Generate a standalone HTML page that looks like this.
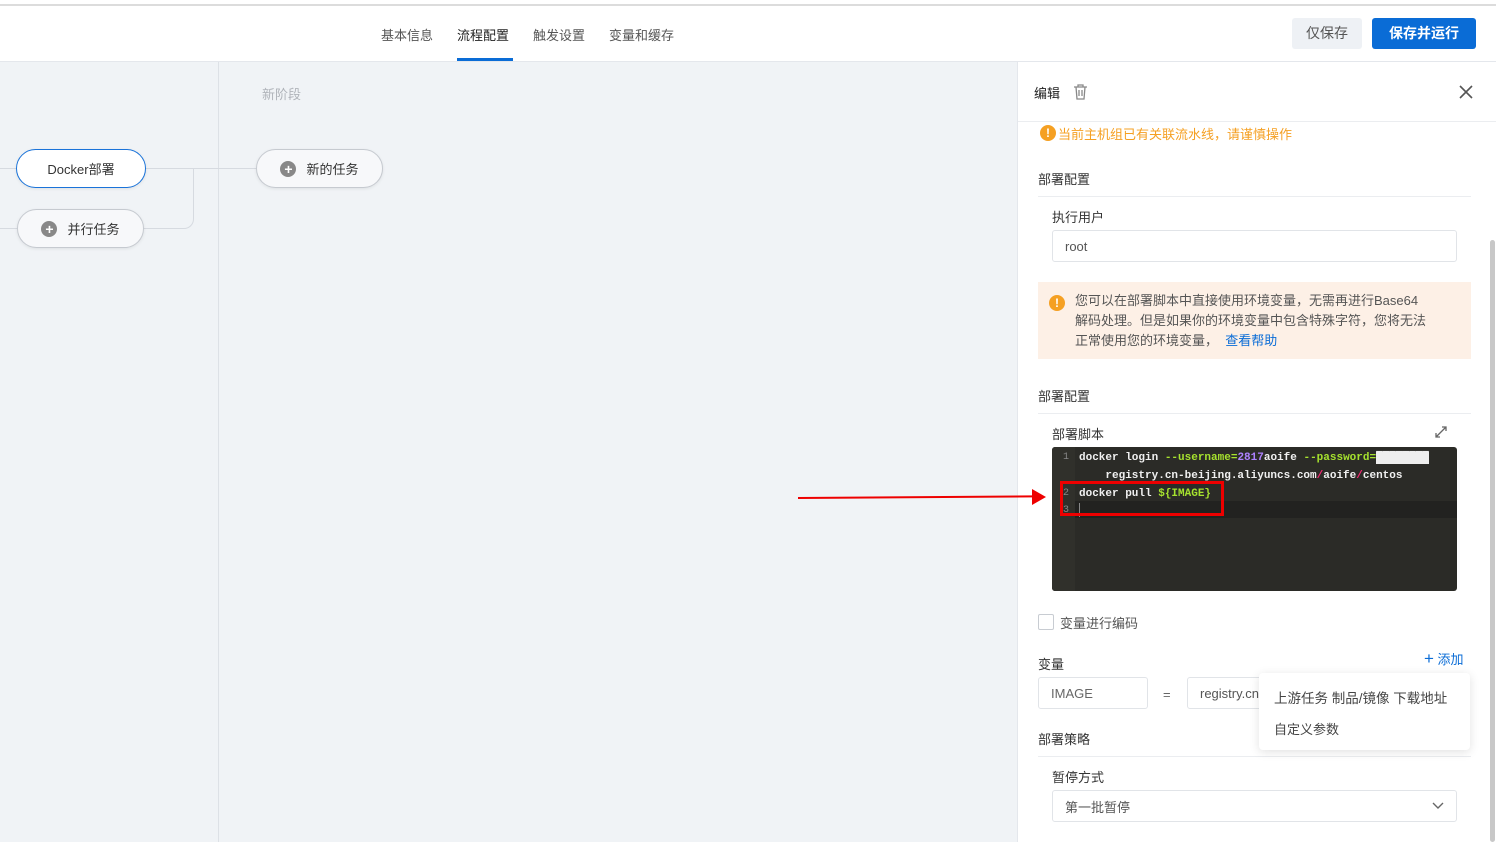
<!DOCTYPE html>
<html><head><meta charset="utf-8"><style>
*{box-sizing:border-box;margin:0;padding:0}
body{width:1496px;height:842px;overflow:hidden;position:relative;background:#f0f3f6;font-family:"Liberation Sans","Noto Sans CJK SC",sans-serif;font-size:13px;color:#333}
.a{position:absolute}
.hdr{left:0;top:0;width:1496px;height:62px;background:#fff;border-bottom:1px solid #e4e7ec}
.tab{top:25px;font-size:13px;color:#555}
.pill{border:1px solid #c6cad0;border-radius:20px;background:#f7f8fa;height:39px;display:flex;align-items:center;justify-content:center;font-size:13px;color:#333;box-shadow:0 1px 3px rgba(0,0,0,.08)}
.plus{width:16px;height:16px;border-radius:50%;background:#888;color:#fff;font-size:14px;line-height:16px;text-align:center;margin-right:10px;font-weight:bold}
.ln{background:#d6dae0}
.panel{left:1017px;top:62px;width:479px;height:780px;background:#fff;border-left:1px solid #e4e7ec}
.lbl{font-size:13px;color:#333}
.sep{height:1px;background:#ebedf0}
.inp{border:1px solid #e1e4e8;border-radius:3px;background:#fff;font-size:13px;color:#555;padding-left:12px;display:flex;align-items:center}
.code{font-family:"Liberation Mono",monospace;font-size:11px;color:#f0f0f0;white-space:pre;font-weight:bold}
.num{font-family:"Liberation Mono",monospace;font-size:10px;color:#888;left:11px}
</style></head><body>
<div class="a hdr"></div>
<div class="a" style="left:0;top:4px;width:1496px;height:2px;background:#dcdcdc"></div>
<div class="a tab" style="left:381px">基本信息</div>
<div class="a tab" style="left:457px;color:#222">流程配置</div>
<div class="a" style="left:457px;top:58px;width:56px;height:3px;background:#0a6cd6"></div>
<div class="a tab" style="left:533px">触发设置</div>
<div class="a tab" style="left:609px">变量和缓存</div>
<div class="a" style="left:1292px;top:18px;width:70px;height:31px;background:#eef1f5;border-radius:3px;font-size:14px;color:#555;text-align:center;line-height:31px">仅保存</div>
<div class="a" style="left:1372px;top:18px;width:104px;height:31px;background:#0a6cd6;border-radius:3px;font-size:14px;color:#fff;text-align:center;line-height:31px;font-weight:bold">保存并运行</div>

<div class="a" style="left:218px;top:62px;width:1px;height:780px;background:#dde1e6"></div>
<div class="a" style="left:262px;top:84px;color:#b0b4ba;font-size:13px">新阶段</div>
<div class="a ln" style="left:0;top:168px;width:16px;height:1px"></div>
<div class="a ln" style="left:0;top:228px;width:18px;height:1px"></div>
<div class="a ln" style="left:145px;top:168px;width:112px;height:1px"></div>
<div class="a" style="left:143px;top:168px;width:51px;height:61px;border-right:1px solid #d6dae0;border-bottom:1px solid #d6dae0;border-bottom-right-radius:10px;border-top:0"></div>
<div class="a pill" style="left:16px;top:149px;width:130px;border-color:#1a73d9;background:#fff">Docker部署</div>
<div class="a pill" style="left:17px;top:209px;width:127px"><span class="plus">+</span>并行任务</div>
<div class="a pill" style="left:256px;top:149px;width:127px"><span class="plus">+</span>新的任务</div>

<div class="a panel"></div>
<div class="a lbl" style="left:1034px;top:83px;color:#222">编辑</div>
<svg class="a" style="left:1073px;top:84px" width="15" height="16" viewBox="0 0 15 16"><path d="M1 3h13M5 3V1h5v2M3 3l1 12h7l1-12M6 6v6M9 6v6" stroke="#888" fill="none" stroke-width="1.3"/></svg>
<svg class="a" style="left:1458px;top:84px" width="16" height="16"><path d="M2 2l12 12M14 2L2 14" stroke="#555" stroke-width="1.6"/></svg>
<div class="a sep" style="left:1018px;top:121px;width:478px"></div>
<div class="a" style="left:1040px;top:125px;width:16px;height:16px;border-radius:50%;background:#f5a023;color:#fff;font-size:12px;font-weight:bold;text-align:center;line-height:16px">!</div>
<div class="a" style="left:1058px;top:124px;color:#f5a023;font-size:13px">当前主机组已有关联流水线，请谨慎操作</div>
<div class="a lbl" style="left:1038px;top:169px">部署配置</div>
<div class="a sep" style="left:1038px;top:196px;width:433px"></div>
<div class="a lbl" style="left:1052px;top:207px">执行用户</div>
<div class="a inp" style="left:1052px;top:230px;width:405px;height:32px">root</div>
<div class="a" style="left:1038px;top:282px;width:433px;height:77px;background:#fdf0e6"></div>
<div class="a" style="left:1049px;top:295px;width:16px;height:16px;border-radius:50%;background:#f5a023;color:#fff;font-size:12px;font-weight:bold;text-align:center;line-height:16px">!</div>
<div class="a" style="left:1075px;top:291px;white-space:nowrap;font-size:13px;line-height:20px;color:#555">您可以在部署脚本中直接使用环境变量，无需再进行Base64<br>解码处理。但是如果你的环境变量中包含特殊字符，您将无法<br>正常使用您的环境变量， <span style="color:#0a6cd6">&nbsp;查看帮助</span></div>
<div class="a lbl" style="left:1038px;top:386px">部署配置</div>
<div class="a sep" style="left:1038px;top:413px;width:433px"></div>
<div class="a lbl" style="left:1052px;top:424px">部署脚本</div>
<svg class="a" style="left:1434px;top:425px" width="14" height="14"><path d="M2 12L12 2M8 2h4v4M2 8v4h4" stroke="#666" fill="none" stroke-width="1.3"/></svg>
<div class="a" style="left:1052px;top:447px;width:405px;height:144px;background:#2b2b27;border-radius:3px;overflow:hidden">
  <div class="a" style="left:0;top:0;width:23px;height:144px;background:#30302b"></div>
  <div class="a" style="left:23px;top:54px;width:382px;height:17px;background:#222220"></div>
  <div class="a num" style="top:5px">1</div>
  <div class="a num" style="top:41px">2</div>
  <div class="a num" style="top:58px">3</div>
  <div class="a" style="left:27px;top:56px;width:1px;height:14px;background:#888"></div>
  <div class="a code" style="left:27px;top:2px;line-height:18px">docker login <span style="color:#a6e22e">--username=</span><span style="color:#ae81ff">2817</span>aoife <span style="color:#a6e22e">--password=</span><span style="background:#eee;color:#eee">████████</span>
    registry.cn-beijing.aliyuncs.com<span style="color:#f92672">/</span>aoife<span style="color:#f92672">/</span>centos
docker pull <span style="color:#a6e22e">${IMAGE}</span></div>
</div>
<div class="a" style="left:1060px;top:481px;width:164px;height:35px;border:3px solid #e00"></div>
<div class="a" style="left:798px;top:497px;width:236px;height:2px;background:#e00;transform:rotate(-0.4deg);transform-origin:left"></div>
<div class="a" style="left:1032px;top:489px;width:0;height:0;border-left:14px solid #e00;border-top:8px solid transparent;border-bottom:8px solid transparent"></div>

<div class="a" style="left:1038px;top:614px;width:16px;height:16px;border:1px solid #c8ccd2;border-radius:2px;background:#fff"></div>
<div class="a lbl" style="left:1060px;top:613px;color:#555">变量进行编码</div>
<div class="a lbl" style="left:1038px;top:654px">变量</div>
<div class="a" style="left:1424px;top:649px;color:#0a6cd6;font-size:13px"><span style="font-size:17px">+</span> 添加</div>
<div class="a inp" style="left:1038px;top:677px;width:110px;height:32px;color:#666">IMAGE</div>
<div class="a" style="left:1163px;top:687px;color:#666">=</div>
<div class="a inp" style="left:1187px;top:677px;width:100px;height:32px;overflow:hidden;white-space:nowrap">registry.cn</div>
<div class="a lbl" style="left:1038px;top:729px">部署策略</div>
<div class="a sep" style="left:1038px;top:756px;width:433px"></div>
<div class="a" style="left:1259px;top:673px;width:211px;height:77px;background:#fff;border-radius:4px;box-shadow:0 2px 10px rgba(0,0,0,.12)"></div>
<div class="a" style="left:1274px;top:687px;color:#444;font-size:13.5px">上游任务 制品/镜像 下载地址</div>
<div class="a lbl" style="left:1274px;top:719px;color:#444">自定义参数</div>
<div class="a lbl" style="left:1052px;top:767px">暂停方式</div>
<div class="a inp" style="left:1052px;top:790px;width:405px;height:32px">第一批暂停</div>
<svg class="a" style="left:1432px;top:802px" width="12" height="8"><path d="M1 1l5 5 5-5" stroke="#666" fill="none" stroke-width="1.4"/></svg>
<div class="a" style="left:1490px;top:240px;width:5px;height:602px;background:#c8c8c8;border-radius:3px"></div>
</body></html>
